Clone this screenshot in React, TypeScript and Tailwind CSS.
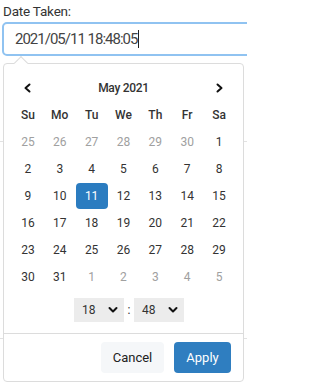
import React from "react";

const weeks: { d: number; muted?: boolean; sel?: boolean }[][] = [
  [{ d: 25, muted: true }, { d: 26, muted: true }, { d: 27, muted: true }, { d: 28, muted: true }, { d: 29, muted: true }, { d: 30, muted: true }, { d: 1 }],
  [{ d: 2 }, { d: 3 }, { d: 4 }, { d: 5 }, { d: 6 }, { d: 7 }, { d: 8 }],
  [{ d: 9 }, { d: 10 }, { d: 11, sel: true }, { d: 12 }, { d: 13 }, { d: 14 }, { d: 15 }],
  [{ d: 16 }, { d: 17 }, { d: 18 }, { d: 19 }, { d: 20 }, { d: 21 }, { d: 22 }],
  [{ d: 23 }, { d: 24 }, { d: 25 }, { d: 26 }, { d: 27 }, { d: 28 }, { d: 29 }],
  [{ d: 30 }, { d: 31 }, { d: 1, muted: true }, { d: 2, muted: true }, { d: 3, muted: true }, { d: 4, muted: true }, { d: 5, muted: true }],
];

const Chevron = ({ dir }: { dir: "left" | "right" | "down" }) => {
  const d =
    dir === "left" ? "M6.5 1.5 L2.5 5 L6.5 8.5" : dir === "right" ? "M2.5 1.5 L6.5 5 L2.5 8.5" : "M1.5 3 L5 6.5 L8.5 3";
  return (
    <svg width="10" height="10" viewBox="0 0 10 10" fill="none">
      <path d={d} stroke="#111" strokeWidth="2" strokeLinecap="round" strokeLinejoin="round" />
    </svg>
  );
};

const TimeSelect = ({ v }: { v: string }) => (
  <div className="flex h-[24px] w-[50px] items-center justify-between bg-[#ececec] pl-[8px] pr-[6px] text-[12px] text-[#333]">
    <span>{v}</span>
    <Chevron dir="down" />
  </div>
);

export default function App() {
  return (
    <div
      className="relative h-[383px] w-[247px] overflow-hidden bg-white"
      style={{ fontFamily: "Roboto, 'Liberation Sans', sans-serif" }}
    >
      <div className="pl-[3px] pt-[3px] text-[13.5px] leading-[17px] tracking-[-0.2px] text-[#333]">Date Taken:</div>
      <div className="ml-[2px] mt-[2px] flex h-[34px] w-[270px] items-center rounded-[5px] border-2 border-[#90c3f1] pl-[11px] text-[15px] tracking-[-1px] text-[#444]">
        <span>2021/05/11 18:48:05</span>
        <span className="ml-[1px] inline-block h-[18px] w-[1px] bg-[#222]" />
      </div>
      <div className="mt-[85px] h-0 border-t border-[#e2e2e2]" />
      <div className="mt-[196px] h-0 border-t border-[#e2e2e2]" />

      <div className="absolute left-[3px] top-[63px] h-[319px] w-[241px] rounded-[4px] border border-[#dcdcdc] bg-white">
        <div className="absolute left-[12px] top-[-6px] h-[10px] w-[10px] rotate-45 border-l border-t border-[#dcdcdc] bg-white" />
        <div className="px-[8px] pt-[10px]">
          <div className="grid h-[27px] grid-cols-7 items-center">
            <div className="flex justify-center">
              <Chevron dir="left" />
            </div>
            <div className="col-span-5 text-center text-[12px] font-medium tracking-[-0.3px] text-[#333]">May 2021</div>
            <div className="flex justify-center pl-[2px]">
              <Chevron dir="right" />
            </div>
          </div>
          <div className="grid h-[27px] grid-cols-7 items-center text-center text-[12px] font-medium text-[#333]">
            {["Su", "Mo", "Tu", "We", "Th", "Fr", "Sa"].map((w) => (
              <div key={w}>{w}</div>
            ))}
          </div>
          {weeks.map((wk, i) => (
            <div key={i} className="grid h-[27px] grid-cols-7 items-center text-center text-[12px]">
              {wk.map((c, j) => (
                <div
                  key={j}
                  className={
                    c.sel
                      ? "flex h-[26px] items-center justify-center rounded-[4px] bg-[#2b7cc0] text-white"
                      : c.muted
                      ? "text-[#a0a0a0]"
                      : "text-[#333]"
                  }
                >
                  {c.d}
                </div>
              ))}
            </div>
          ))}
          <div className="ml-[62px] mt-[8px] flex items-center">
            <TimeSelect v="18" />
            <span className="w-[10px] text-center text-[12px] text-[#333]">:</span>
            <TimeSelect v="48" />
          </div>
        </div>
        <div className="mt-[11px] flex justify-end gap-[10px] border-t border-[#dcdcdc] pr-[12px] pt-[8px]">
          <button className="h-[31px] w-[63px] rounded-[4px] bg-[#f5f7f9] text-[13px] text-[#222]">Cancel</button>
          <button className="h-[31px] w-[57px] rounded-[4px] bg-[#2f7ec0] text-[13px] text-white">Apply</button>
        </div>
      </div>
    </div>
  );
}
